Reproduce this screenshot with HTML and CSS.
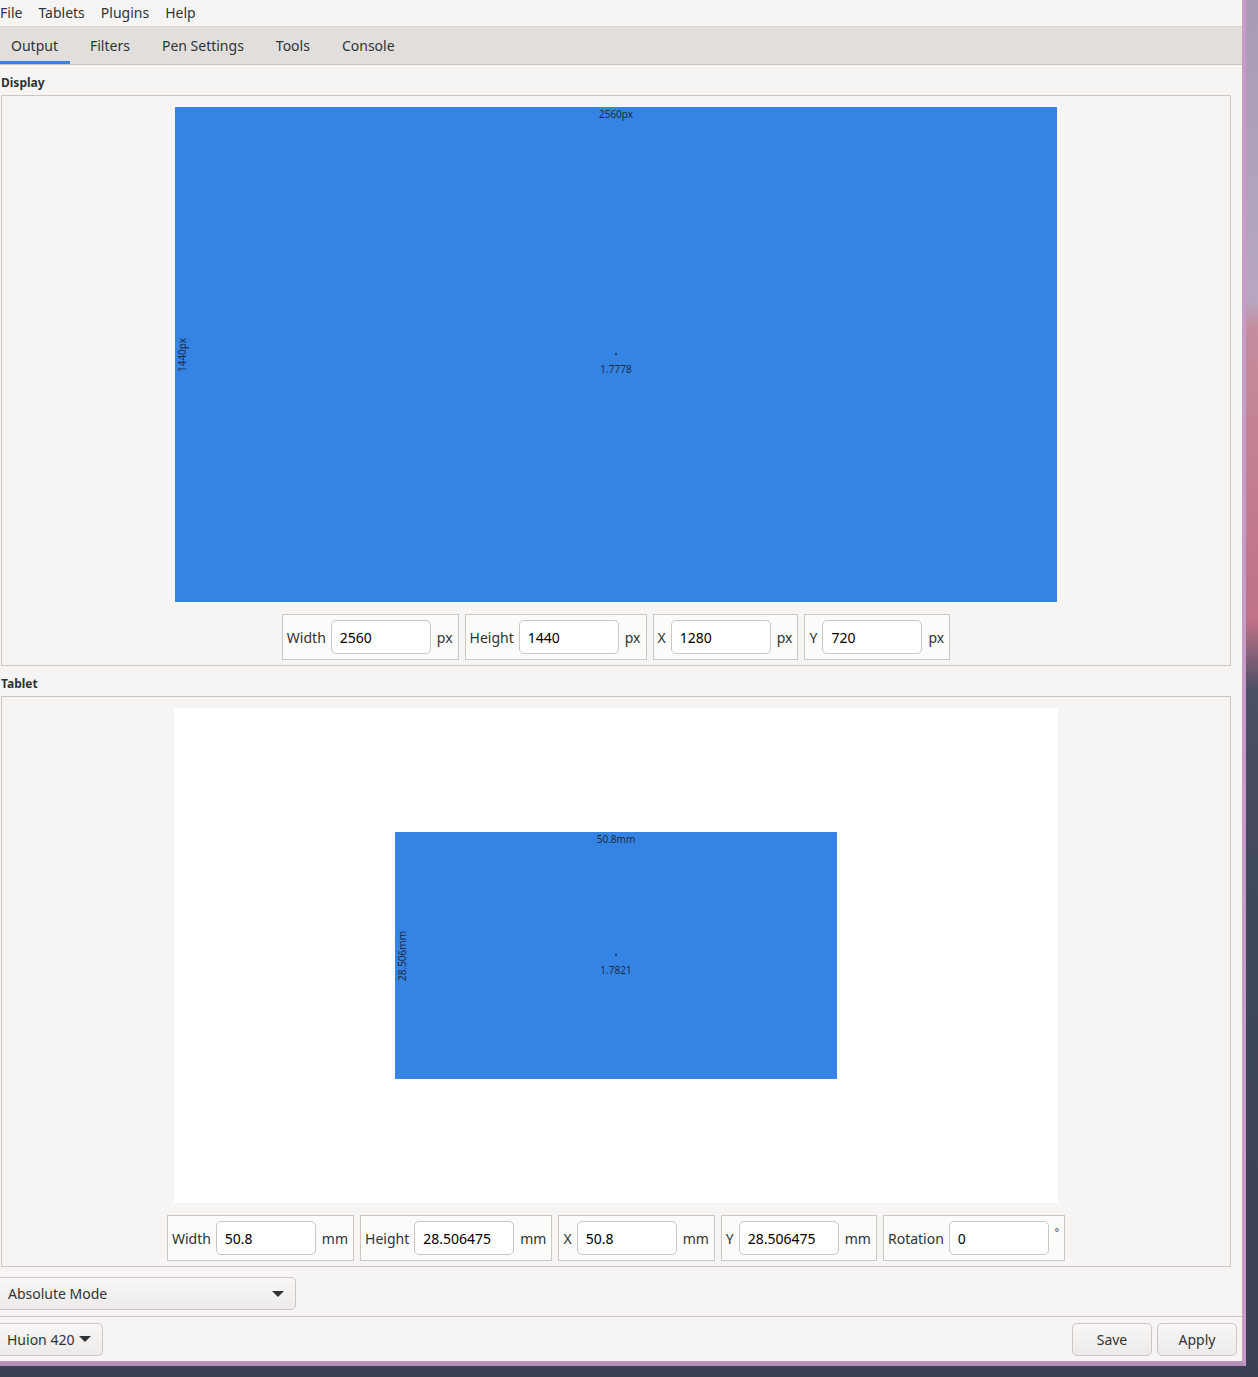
FILE: index.html
```html
<!DOCTYPE html>
<html>
<head>
<meta charset="utf-8">
<link rel="stylesheet" href="styles.css">
</head>
<body>
<div class="window">
  <div class="menubar">
    <span class="menu-item">File</span>
    <span class="menu-item">Tablets</span>
    <span class="menu-item">Plugins</span>
    <span class="menu-item">Help</span>
  </div>
  <div class="tabs">
    <span class="tab active">Output</span>
    <span class="tab">Filters</span>
    <span class="tab">Pen Settings</span>
    <span class="tab">Tools</span>
    <span class="tab">Console</span>
  </div>
  <div class="content">
    <div class="section-label">Display</div>
    <div class="frame">
      <div class="canvas display-canvas">
        <div class="area display-area">
          <span class="dim-top">2560px</span>
          <span class="dim-left">1440px</span>
          <span class="center-dot"></span>
          <span class="ratio">1.7778</span>
        </div>
      </div>
      <div class="fields">
        <div class="group"><span class="lbl">Width</span><span class="input">2560</span><span class="unit">px</span></div>
        <div class="group"><span class="lbl">Height</span><span class="input">1440</span><span class="unit">px</span></div>
        <div class="group"><span class="lbl">X</span><span class="input">1280</span><span class="unit">px</span></div>
        <div class="group"><span class="lbl">Y</span><span class="input">720</span><span class="unit">px</span></div>
      </div>
    </div>
    <div class="section-label">Tablet</div>
    <div class="frame">
      <div class="canvas tablet-canvas">
        <div class="area tablet-area">
          <span class="dim-top">50.8mm</span>
          <span class="dim-left">28.506mm</span>
          <span class="center-dot"></span>
          <span class="ratio">1.7821</span>
        </div>
      </div>
      <div class="fields">
        <div class="group"><span class="lbl">Width</span><span class="input">50.8</span><span class="unit">mm</span></div>
        <div class="group"><span class="lbl">Height</span><span class="input">28.506475</span><span class="unit">mm</span></div>
        <div class="group"><span class="lbl">X</span><span class="input">50.8</span><span class="unit">mm</span></div>
        <div class="group"><span class="lbl">Y</span><span class="input">28.506475</span><span class="unit">mm</span></div>
        <div class="group"><span class="lbl">Rotation</span><span class="input">0</span><span class="unit deg">°</span></div>
      </div>
    </div>
    <div class="combo">
      <span>Absolute Mode</span>
      <span class="caret"></span>
    </div>
  </div>
  <div class="bottombar">
    <div class="button tablet-btn">Huion 420 <span class="caret"></span></div>
    <div class="spacer"></div>
    <div class="button action">Save</div>
    <div class="button action">Apply</div>
  </div>
</div>
</body>
</html>
```

FILE: styles.css
```css
html, body {
  margin: 0;
  padding: 0;
}
body {
  width: 1258px;
  height: 1377px;
  overflow: hidden;
  font-family: "Noto Sans", "Open Sans", sans-serif;
  color: #2e3436;
  background:
    linear-gradient(to bottom, #a99bb6 0px, #b6a6c2 300px, #c58c9c 330px, #c07186 620px, #4a5066 690px, #3f475b 900px, #3a4154 1377px);
}
.window {
  width: 1242px;
  height: 1361px;
  background: #f6f5f4;
  border-right: 4px solid #c89cc9;
  border-bottom: 5px solid #b48fb7;
  display: flex;
  flex-direction: column;
  box-sizing: content-box;
}
.menubar {
  height: 26px;
  display: flex;
  align-items: center;
  margin-left: -8px;
  border-bottom: 1px solid #d8d4d0;
  font-size: 14px;
}
.menu-item {
  padding: 0 8px;
  line-height: 26px;
}
.tabs {
  height: 37px;
  background: #e1dedb;
  border-bottom: 1px solid #cdc7c2;
  display: flex;
  align-items: stretch;
  gap: 8px;
  font-size: 14px;
}
.tab {
  padding: 0 12px;
  display: flex;
  align-items: center;
  color: #2e3436;
}
.tab.active {
  padding-left: 11px;
  box-shadow: inset 0 -3px 0 #3584e4;
}
.content {
  flex: 1;
  padding: 0 11px 0 1px;
  display: flex;
  flex-direction: column;
}
.section-label {
  height: 30px;
  box-sizing: border-box;
  padding-top: 10px;
  line-height: 16px;
  font-size: 12px;
  font-weight: bold;
  color: #2e3436;
}
.frame {
  border: 1px solid #cdc7c2;
  padding: 11px 0 5px;
  display: flex;
  flex-direction: column;
  align-items: center;
  gap: 12px;
}
.canvas {
  height: 495px;
  display: flex;
  align-items: center;
  justify-content: center;
}
.display-canvas {
  width: 882px;
}
.tablet-canvas {
  width: 884px;
  background: #ffffff;
}
.area {
  position: relative;
  background: #3584e4;
  color: #1a2b44;
  font-size: 10px;
}
.display-area {
  width: 882px;
  height: 495px;
}
.tablet-area {
  width: 442px;
  height: 247px;
}
.dim-top {
  position: absolute;
  top: 1px;
  left: 0;
  right: 0;
  text-align: center;
  line-height: 13px;
}
.dim-left {
  position: absolute;
  left: 1px;
  top: 50%;
  writing-mode: vertical-rl;
  transform: translateY(-50%) rotate(180deg);
  line-height: 13px;
}
.center-dot {
  position: absolute;
  left: 50%;
  top: 50%;
  width: 2px;
  height: 2px;
  margin: -2px 0 0 -1px;
  background: #1a2b44;
  border-radius: 1px;
}
.ratio {
  position: absolute;
  left: 0;
  right: 0;
  top: 50%;
  margin-top: 8px;
  text-align: center;
  line-height: 13px;
}
.fields {
  display: flex;
  gap: 6px;
}
.group {
  height: 46px;
  box-sizing: border-box;
  border: 1px solid #cdc7c2;
  background: #fbfbfa;
  padding: 0 5px 0 4px;
  display: flex;
  align-items: center;
  gap: 5px;
  font-size: 14px;
}
.input {
  width: 100px;
  height: 34px;
  box-sizing: border-box;
  border: 1px solid #cdc7c2;
  border-radius: 5px;
  background: #ffffff;
  padding-left: 8px;
  display: flex;
  align-items: center;
  color: #000000;
}
.unit {
  margin-left: 1px;
}
.unit.deg {
  font-size: 10px;
  align-self: flex-start;
  margin-top: 9px;
  margin-left: 1px;
  margin-right: 0;
}
.combo {
  margin-top: 10px;
  width: 296px;
  height: 33px;
  box-sizing: border-box;
  border: 1px solid #cdc7c2;
  border-left: none;
  border-radius: 0 5px 5px 0;
  background: linear-gradient(#f8f7f6, #edebe9);
  display: flex;
  align-items: center;
  justify-content: space-between;
  padding: 0 11px 0 8px;
  font-size: 14px;
  margin-left: -1px;
}
.caret {
  display: inline-block;
  width: 0;
  height: 0;
  border-left: 6px solid transparent;
  border-right: 6px solid transparent;
  border-top: 6px solid #2e3436;
}
.bottombar {
  height: 44px;
  border-top: 1px solid #cdc7c2;
  display: flex;
  align-items: center;
  padding: 0 5px 0 0;
  gap: 5px;
}
.spacer {
  flex: 1;
}
.button {
  height: 33px;
  box-sizing: border-box;
  border: 1px solid #cdc7c2;
  border-radius: 5px;
  background: linear-gradient(#f8f7f6, #edebe9);
  display: flex;
  align-items: center;
  justify-content: center;
  font-size: 14px;
}
.tablet-btn {
  width: 103px;
  border-left: none;
  border-radius: 0 5px 5px 0;
  justify-content: flex-start;
  padding-left: 7px;
  gap: 5px;
}
.action {
  width: 80px;
}
```
